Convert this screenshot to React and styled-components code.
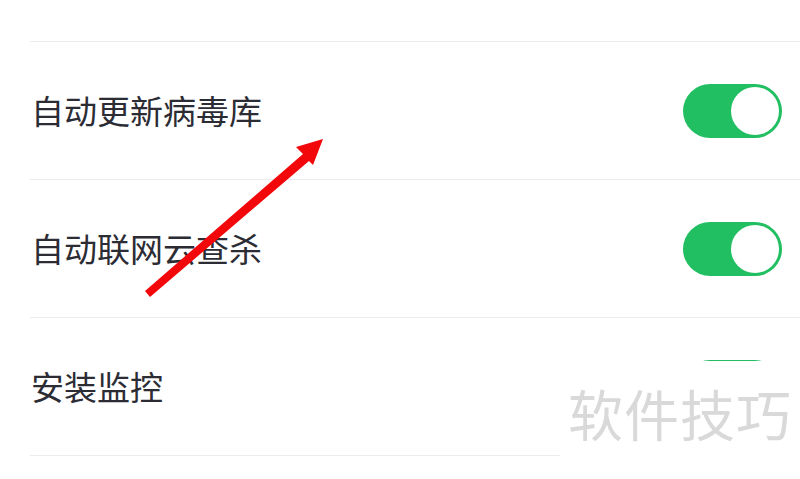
import React from "react";
import styled, { createGlobalStyle } from "styled-components";

const Global = createGlobalStyle`
  html, body { margin: 0; padding: 0; background: #ffffff; }
  body { font-family: "Noto Sans CJK SC", "Noto Sans", sans-serif; }
`;

const Page = styled.div`
  position: relative;
  width: 800px;
  height: 479px;
  overflow: hidden;
  background: #ffffff;
`;

const TopGap = styled.div`
  height: 41px;
  margin-left: 30px;
  border-bottom: 1px solid #ececec;
`;

const List = styled.div`
  display: flex;
  flex-direction: column;
`;

const Row = styled.div`
  display: flex;
  align-items: center;
  justify-content: space-between;
  height: 137px;
  margin-left: 30px;
  padding-right: 18px;
  border-bottom: 1px solid #ececec;
`;

const Label = styled.span`
  font-family: "Noto Sans CJK SC", sans-serif;
  font-size: 33px;
  color: #2c2c34;
  line-height: 1;
  margin-left: 1px;
`;

const Track = styled.div`
  position: relative;
  width: 99px;
  height: 54px;
  border-radius: 27px;
  background: ${(p) => (p.$on ? "#21bf62" : "#e5e5e5")};
  flex: none;
`;

const Knob = styled.div`
  position: absolute;
  top: 3px;
  ${(p) => (p.$on ? "right: 3px;" : "left: 3px;")}
  width: 48px;
  height: 48px;
  border-radius: 50%;
  background: #ffffff;
`;

const Toggle = ({ on }) => (
  <Track $on={on}>
    <Knob $on={on} />
  </Track>
);

const Watermark = styled.div`
  position: absolute;
  left: 560px;
  top: 361px;
  width: 240px;
  height: 118px;
  background: #ffffff;
  display: flex;
  justify-content: center;
  padding-top: 18px;
  box-sizing: border-box;
  font-family: "Noto Sans CJK SC", sans-serif;
  font-size: 55px;
  line-height: 1.2;
  color: #d9d9d9;
  letter-spacing: 1px;
`;

const ArrowLayer = styled.svg`
  position: absolute;
  left: 0;
  top: 0;
  pointer-events: none;
`;

const rows = [
  { label: "自动更新病毒库", on: true },
  { label: "自动联网云查杀", on: true },
  { label: "安装监控", on: true },
];

export default function App() {
  return (
    <Page>
      <Global />
      <TopGap />
      <List>
        {rows.map((r) => (
          <Row key={r.label}>
            <Label>{r.label}</Label>
            <Toggle on={r.on} />
          </Row>
        ))}
      </List>
      <Watermark>软件技巧</Watermark>
      <ArrowLayer width="800" height="479" viewBox="0 0 800 479">
        <polygon
          points="145,291 303,154 296,147 323,139 313,165 309,161 150,297"
          fill="#f2070b"
          strokeLinejoin="round"
        />
      </ArrowLayer>
    </Page>
  );
}
